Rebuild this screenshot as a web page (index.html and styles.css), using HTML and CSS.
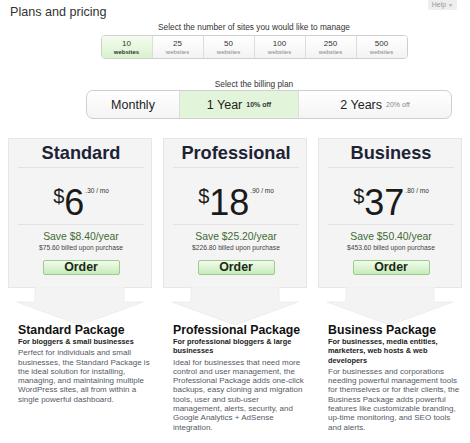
FILE: index.html
```html
<!DOCTYPE html>
<html lang="en">
<head>
    <meta charset="UTF-8">
    <title>Plans and pricing</title>
    <link rel="stylesheet" href="styles.css">
</head>
<body>
    <div class="top">
        <h1 class="page-title">Plans and pricing</h1>
        <div class="help">Help <span class="caret">&#9660;</span></div>
    </div>

    <div class="picker">
        <div class="picker-label">Select the number of sites you would like to manage</div>
        <div class="sites">
            <div class="site active"><b>10</b><span>websites</span></div>
            <div class="site"><b>25</b><span>websites</span></div>
            <div class="site"><b>50</b><span>websites</span></div>
            <div class="site"><b>100</b><span>websites</span></div>
            <div class="site"><b>250</b><span>websites</span></div>
            <div class="site"><b>500</b><span>websites</span></div>
        </div>
    </div>

    <div class="picker billing-picker">
        <div class="picker-label">Select the billing plan</div>
        <div class="billing">
            <div class="term monthly">Monthly</div>
            <div class="term year active">1 Year <small>10% off</small></div>
            <div class="term years">2 Years <small>20% off</small></div>
        </div>
    </div>

    <div class="plans">
        <div class="plan">
            <div class="plan-card">
                <h2 class="plan-name">Standard</h2>
                <div class="plan-price"><span class="cur">$</span>6<span class="cents">.30 / mo</span></div>
                <div class="plan-save">Save $8.40/year</div>
                <div class="plan-billed">$75.60 billed upon purchase</div>
                <button class="order">Order</button>
            </div>
            <svg class="plan-arrow" width="144" height="38" viewBox="0 0 144 38">
                <path d="M27 0 V15 H9 L72 38 L135 15 H116 V0 Z" fill="#f3f3f3" stroke="#ededed" stroke-width="1"/>
            </svg>
            <div class="plan-info">
                <h3>Standard Package</h3>
                <h4>For bloggers &amp; small businesses</h4>
                <p>Perfect for individuals and small businesses, the Standard Package is the ideal solution for installing, managing, and maintaining multiple WordPress sites, all from within a single powerful dashboard.</p>
            </div>
        </div>

        <div class="plan">
            <div class="plan-card">
                <h2 class="plan-name">Professional</h2>
                <div class="plan-price"><span class="cur">$</span>18<span class="cents">.90 / mo</span></div>
                <div class="plan-save">Save $25.20/year</div>
                <div class="plan-billed">$226.80 billed upon purchase</div>
                <button class="order">Order</button>
            </div>
            <svg class="plan-arrow" width="144" height="38" viewBox="0 0 144 38">
                <path d="M28 0 V15 H9 L72 38 L135 15 H116 V0 Z" fill="#f3f3f3" stroke="#ededed" stroke-width="1"/>
            </svg>
            <div class="plan-info">
                <h3>Professional Package</h3>
                <h4>For professional bloggers &amp; large businesses</h4>
                <p>Ideal for businesses that need more control and user management, the Professional Package adds one-click backups, easy cloning and migration tools, user and sub-user management, alerts, security, and Google Analytics + AdSense integration.</p>
            </div>
        </div>

        <div class="plan">
            <div class="plan-card">
                <h2 class="plan-name">Business</h2>
                <div class="plan-price"><span class="cur">$</span>37<span class="cents">.80 / mo</span></div>
                <div class="plan-save">Save $50.40/year</div>
                <div class="plan-billed">$453.60 billed upon purchase</div>
                <button class="order">Order</button>
            </div>
            <svg class="plan-arrow" width="144" height="38" viewBox="0 0 144 38">
                <path d="M28 0 V15 H9 L72 38 L135 15 H116 V0 Z" fill="#f3f3f3" stroke="#ededed" stroke-width="1"/>
            </svg>
            <div class="plan-info">
                <h3>Business Package</h3>
                <h4>For businesses, media entities, marketers, web hosts &amp; web developers</h4>
                <p>For businesses and corporations needing powerful management tools for themselves or for their clients, the Business Package adds powerful features like customizable branding, up-time monitoring, and SEO tools and alerts.</p>
            </div>
        </div>
    </div>
</body>
</html>
```

FILE: styles.css
```css
body {
    margin: 0;
    padding: 0 8px;
    background: #fff;
    font-family: "Liberation Sans", Arial, sans-serif;
    color: #333;
}
.top {
    display: flex;
    justify-content: space-between;
    align-items: flex-start;
    height: 22px;
}
.page-title {
    margin: 3px 0 0 2px;
    font-size: 12.6px;
    font-weight: normal;
    line-height: 18px;
    color: #333;
}
.help {
    margin-right: 5px;
    padding: 0 4px;
    height: 10px;
    line-height: 9px;
    font-size: 7px;
    color: #999;
    background: #eee;
    border-radius: 0 0 2px 2px;
}
.caret {
    font-size: 5px;
    color: #aaa;
}

.picker {
    display: flex;
    flex-direction: column;
    align-items: center;
    padding-left: 38px;
}
.picker-label {
    font-size: 8.3px;
    line-height: 11px;
    color: #333;
}
.sites {
    display: flex;
    margin-top: 2px;
    border: 1px solid #cfcfcf;
    border-radius: 4px;
    overflow: hidden;
}
.site {
    width: 50px;
    height: 22px;
    display: flex;
    flex-direction: column;
    align-items: center;
    justify-content: center;
    background: linear-gradient(#fff, #f3f3f3);
    border-left: 1px solid #ddd;
    font-size: 8px;
    color: #333;
}
.site:first-child {
    border-left: 0;
}
.site b {
    font-weight: normal;
    line-height: 9px;
}
.site span {
    font-size: 6px;
    line-height: 8px;
    color: #888;
}
.site.active {
    background: linear-gradient(#f4fcef, #d9f2cd);
}
.site.active span {
    color: #333;
    font-weight: bold;
}

.billing-picker {
    margin-top: 20px;
}
.billing {
    display: flex;
    margin-left: 30px;
    border: 1px solid #cfcfcf;
    border-radius: 7px;
    overflow: hidden;
    background: linear-gradient(#fff, #f4f4f4);
}
.term {
    height: 27px;
    display: flex;
    align-items: center;
    justify-content: center;
    font-size: 12.5px;
    color: #222;
    border-left: 1px solid #ddd;
}
.term small {
    margin-left: 4px;
    font-size: 7px;
    color: #888;
}
.monthly {
    width: 92px;
    border-left: 0;
}
.year {
    width: 118px;
}
.years {
    width: 152px;
}
.term.active {
    background: #e2f5da;
}
.term.active small {
    color: #333;
    font-weight: bold;
}

.plans {
    display: flex;
    gap: 11px;
    margin-top: 19px;
}
.plan {
    width: 144px;
    display: flex;
    flex-direction: column;
}
.plan-card {
    height: 150px;
    box-sizing: border-box;
    padding: 3px 7px 0 9px;
    background: #f4f4f4;
    border: 1px solid #e6e6e6;
    text-align: center;
}
.plan-name {
    margin: 0;
    padding-bottom: 3px;
    font-size: 18.2px;
    line-height: 22px;
    color: #1d2335;
    border-bottom: 1px solid #e2e2e2;
}
.plan-price {
    height: 57px;
    padding-top: 3px;
    box-sizing: border-box;
    font-size: 36px;
    line-height: 40px;
    color: #1a1a1a;
    border-bottom: 1px solid #e2e2e2;
}
.cur {
    font-size: 20px;
    vertical-align: 12px;
}
.cents {
    font-size: 6.5px;
    vertical-align: 22px;
    color: #333;
    margin-left: 1px;
}
.plan-save {
    margin-top: 6px;
    font-size: 10.4px;
    line-height: 12px;
    color: #3f6b32;
}
.plan-billed {
    font-size: 6.7px;
    line-height: 10px;
    color: #444;
}
.order {
    display: block;
    width: 77px;
    height: 15px;
    margin: 7px auto 0;
    padding: 0;
    font-family: inherit;
    font-size: 12.4px;
    font-weight: bold;
    line-height: 13px;
    color: #1a2a14;
    background: linear-gradient(#f3fcee, #c6ebba);
    border: 1px solid #9ccc8c;
    border-radius: 2px;
}
.plan-arrow {
    display: block;
    margin-top: -1px;
}
.plan-info {
    padding-left: 10px;
    margin-top: -1px;
}
.plan-info h3 {
    margin: 0;
    font-size: 12.3px;
    line-height: 13px;
    color: #111;
}
.plan-info h4 {
    margin: 0;
    font-size: 7.4px;
    line-height: 9.3px;
    color: #222;
}
.plan-info p {
    margin: 2px 0 0;
    font-size: 8px;
    line-height: 9.3px;
    color: #555a66;
}
```
